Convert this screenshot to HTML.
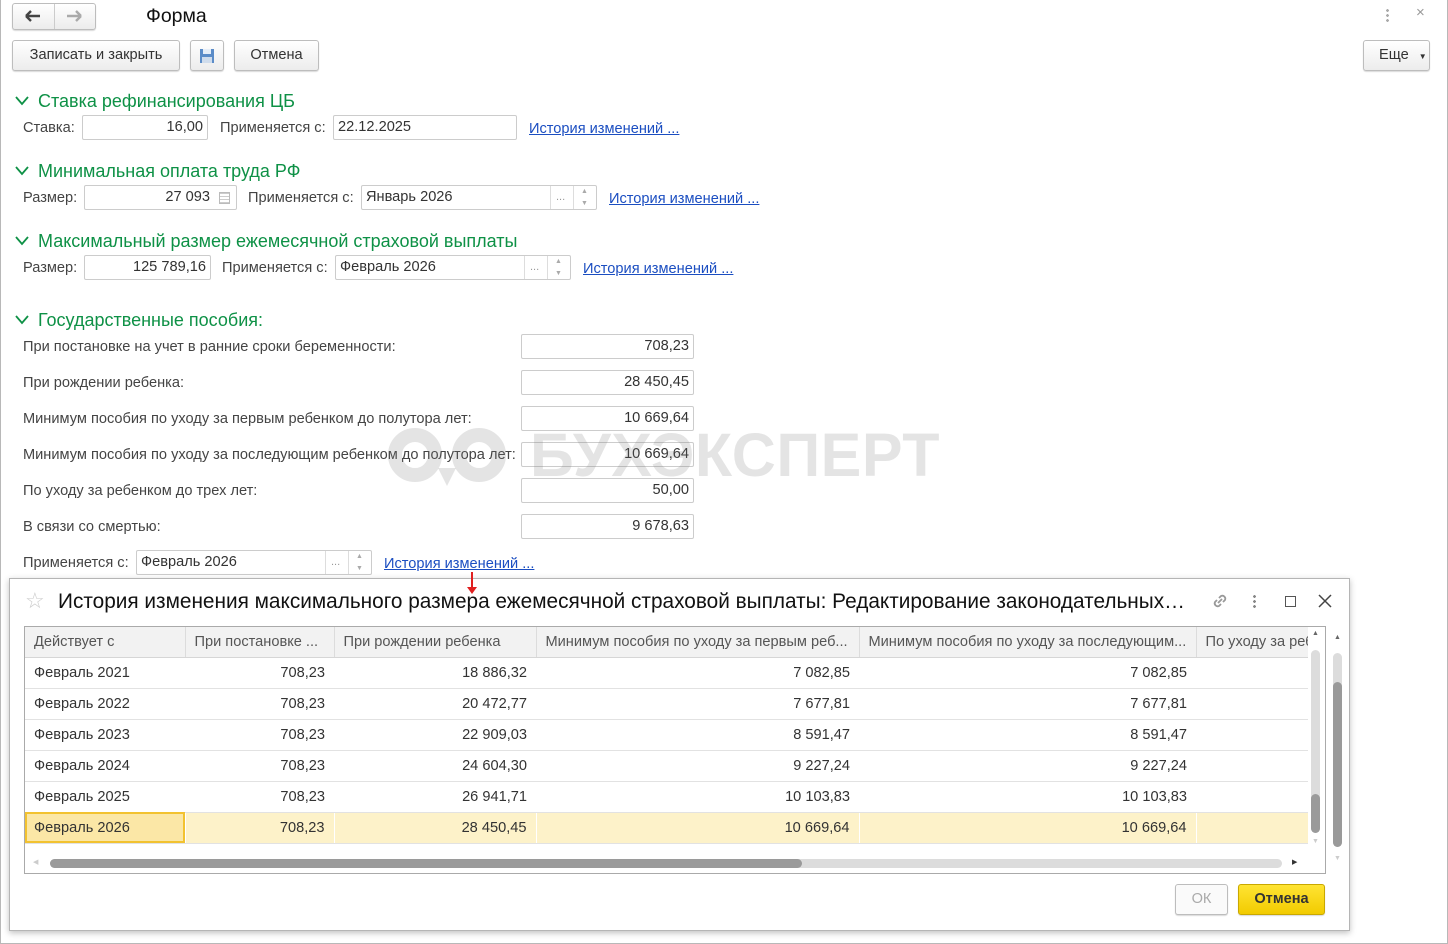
<!DOCTYPE html>
<html><head><meta charset="utf-8"><style>
*{box-sizing:border-box;margin:0;padding:0}
body{width:1448px;height:944px;background:#fff;font-family:"Liberation Sans",Arial,sans-serif;font-size:14.6px;color:#333;position:relative;overflow:hidden}
.a{position:absolute;white-space:nowrap}
.btn{position:absolute;height:31px;border:1px solid #bdbdbd;border-radius:3px;background:linear-gradient(#fff,#ececec);box-shadow:0 1px 1px rgba(0,0,0,.15);text-align:center;line-height:29px;font-size:14.6px;color:#333}
.inp{position:absolute;height:25px;border:1px solid #ccc;border-radius:2px;background:#fff;line-height:23px;padding:0 4px;font-size:14.6px;color:#333}
.r{text-align:right}
.h{position:absolute;font-size:18px;color:#0e9146;white-space:nowrap}
.h svg{position:absolute;left:-23px;top:5px}
.lnk{position:absolute;color:#1b4ec1;text-decoration:underline;white-space:nowrap}
.sp{position:absolute;border-left:1px solid #ddd;height:23px;top:0}
.lab{position:absolute;white-space:nowrap;color:#444}
table{border-collapse:collapse;position:absolute;left:25px;top:627px;width:1283px;table-layout:fixed}
td,th{height:31px;padding:0 9px;font-size:14.6px;white-space:nowrap;overflow:hidden;text-overflow:ellipsis;border-bottom:1px solid #e2e2e2}
th{background:#f2f2f2;color:#555;font-weight:normal;text-align:left;border-right:1px solid #dcdcdc;height:30px;border-bottom:1px solid #d6d6d6}
th:last-child{text-overflow:clip}
td{text-align:right;color:#333}
td:first-child{text-align:left}
tr.sel td{background:#fdf2c9;border-right:1px solid #fff}
</style></head><body>
<div class="a" style="left:0;top:0;width:1448px;height:944px;border:1px solid #b8b8b8;border-top:none"></div>
<div class="btn" style="left:12px;top:3px;width:84px;height:27px;padding:0"></div>
<div class="a" style="left:54px;top:4px;width:1px;height:25px;background:#ccc"></div>
<svg class="a" style="left:24px;top:9px" width="18" height="14"><path d="M2 7H16M2 7L7 2M2 7L7 12" stroke="#444" stroke-width="2.4" fill="none"/></svg>
<svg class="a" style="left:65px;top:9px" width="18" height="14"><path d="M2 7H16M16 7L11 2M16 7L11 12" stroke="#aaa" stroke-width="2.4" fill="none"/></svg>
<div class="a" style="left:146px;top:5px;font-size:19.5px;color:#111">Форма</div>
<div class="a" style="left:1386px;top:8px;width:3px;height:14px;background:radial-gradient(circle,#aaa 1.3px,transparent 1.5px) 0 0/3px 5px"></div>
<div class="a" style="left:1416px;top:4px;font-size:15px;color:#999">×</div>

<div class="btn" style="left:12px;top:40px;width:168px">Записать и закрыть</div>
<div class="btn" style="left:190px;top:40px;width:34px"><svg style="margin-top:7px" width="16" height="16"><rect x="1" y="1" width="14" height="14" fill="#5b8cc8"/><rect x="4" y="1" width="8" height="5" fill="#e6eef8"/><rect x="3" y="9" width="10" height="6" fill="#cfdcec"/></svg></div>
<div class="btn" style="left:234px;top:40px;width:85px">Отмена</div>
<div class="btn" style="left:1363px;top:40px;width:67px;text-align:left;padding-left:15px">Еще <span style="font-size:8px;margin-left:6px">▼</span></div>

<div class="h" style="left:38px;top:91px"><svg width="14" height="10"><path d="M1 1L7 8L13 1" stroke="#0e9146" stroke-width="1.8" fill="none"/></svg>Ставка рефинансирования ЦБ</div>
<div class="lab" style="left:23px;top:120px">Ставка:</div>
<div class="inp r" style="left:82px;top:115px;width:126px">16,00</div>
<div class="lab" style="left:220px;top:120px">Применяется с:</div>
<div class="inp" style="left:333px;top:115px;width:184px">22.12.2025</div>
<div class="lnk" style="left:529px;top:121px">История изменений ...</div>

<div class="h" style="left:38px;top:161px"><svg width="14" height="10"><path d="M1 1L7 8L13 1" stroke="#0e9146" stroke-width="1.8" fill="none"/></svg>Минимальная оплата труда РФ</div>
<div class="lab" style="left:23px;top:190px">Размер:</div>
<div class="inp r" style="left:84px;top:185px;width:153px;padding-right:26px">27 093</div>
<div class="a" style="left:219px;top:192px;width:11px;height:12px;border:1px solid #bbb;background:repeating-linear-gradient(#ccc 0 1px,#fff 1px 3px)"></div>
<div class="lab" style="left:248px;top:190px">Применяется с:</div>
<div class="inp" style="left:361px;top:185px;width:236px">Январь 2026<div class="sp" style="left:188px"></div><div class="sp" style="left:211px"></div><span class="a" style="left:194px;top:0;color:#999;font-size:11px">...</span><span class="a" style="left:219px;top:-6px;color:#aaa;font-size:7px">▲</span><span class="a" style="left:219px;top:6px;color:#aaa;font-size:7px">▼</span></div>
<div class="lnk" style="left:609px;top:191px">История изменений ...</div>

<div class="h" style="left:38px;top:231px"><svg width="14" height="10"><path d="M1 1L7 8L13 1" stroke="#0e9146" stroke-width="1.8" fill="none"/></svg>Максимальный размер ежемесячной страховой выплаты</div>
<div class="lab" style="left:23px;top:260px">Размер:</div>
<div class="inp r" style="left:84px;top:255px;width:127px">125 789,16</div>
<div class="lab" style="left:222px;top:260px">Применяется с:</div>
<div class="inp" style="left:335px;top:255px;width:236px">Февраль 2026<div class="sp" style="left:188px"></div><div class="sp" style="left:211px"></div><span class="a" style="left:194px;top:0;color:#999;font-size:11px">...</span><span class="a" style="left:219px;top:-6px;color:#aaa;font-size:7px">▲</span><span class="a" style="left:219px;top:6px;color:#aaa;font-size:7px">▼</span></div>
<div class="lnk" style="left:583px;top:261px">История изменений ...</div>

<div class="h" style="left:38px;top:310px"><svg width="14" height="10"><path d="M1 1L7 8L13 1" stroke="#0e9146" stroke-width="1.8" fill="none"/></svg>Государственные пособия:</div>
<div class="lab" style="left:23px;top:339px">При постановке на учет в ранние сроки беременности:</div>
<div class="inp r" style="left:521px;top:334px;width:173px">708,23</div>
<div class="lab" style="left:23px;top:375px">При рождении ребенка:</div>
<div class="inp r" style="left:521px;top:370px;width:173px">28 450,45</div>
<div class="lab" style="left:23px;top:411px">Минимум пособия по уходу за первым ребенком до полутора лет:</div>
<div class="inp r" style="left:521px;top:406px;width:173px">10 669,64</div>
<div class="lab" style="left:23px;top:447px">Минимум пособия по уходу за последующим ребенком до полутора лет:</div>
<div class="inp r" style="left:521px;top:442px;width:173px">10 669,64</div>
<div class="lab" style="left:23px;top:483px">По уходу за ребенком до трех лет:</div>
<div class="inp r" style="left:521px;top:478px;width:173px">50,00</div>
<div class="lab" style="left:23px;top:519px">В связи со смертью:</div>
<div class="inp r" style="left:521px;top:514px;width:173px">9 678,63</div>
<div class="lab" style="left:23px;top:555px">Применяется с:</div>
<div class="inp" style="left:136px;top:550px;width:236px">Февраль 2026<div class="sp" style="left:188px"></div><div class="sp" style="left:211px"></div><span class="a" style="left:194px;top:0;color:#999;font-size:11px">...</span><span class="a" style="left:219px;top:-6px;color:#aaa;font-size:7px">▲</span><span class="a" style="left:219px;top:6px;color:#aaa;font-size:7px">▼</span></div>
<div class="lnk" style="left:384px;top:556px">История изменений ...</div>

<svg class="a" style="left:383px;top:418px" width="130" height="72"><g fill="none" stroke="rgba(120,120,120,.2)" stroke-width="14"><circle cx="32" cy="37" r="20"/><circle cx="96" cy="37" r="20"/></g><path d="M0 5L30 14M128 5L98 14M55 50L64 68L73 50Z" fill="rgba(120,120,120,.2)"/></svg>
<div class="a" style="left:530px;top:420px;font-size:61px;font-weight:bold;color:rgba(120,120,120,.2);letter-spacing:0.5px">БУХЭКСПЕРТ</div>

<div class="a" style="left:9px;top:578px;width:1341px;height:353px;background:#fff;border:1px solid #b5b5b5;box-shadow:0 2px 6px rgba(0,0,0,.25)"></div>
<div class="a" style="left:471px;top:572px;width:2px;height:16px;background:#e02020"></div>
<div class="a" style="left:467px;top:587px;border:5px solid transparent;border-top:7px solid #e02020"></div>
<div class="a" style="left:25px;top:588px;font-size:22px;color:#ccc">☆</div>
<div class="a" style="left:58px;top:590px;font-size:20.8px;color:#111">История изменения максимального размера ежемесячной страховой выплаты: Редактирование законодательных…</div>
<svg class="a" style="left:1210px;top:591px" width="20" height="20"><g stroke="#999" stroke-width="1.8" fill="none"><path d="M8 12L12 8"/><path d="M9 7l2-2a3 3 0 0 1 4 4l-2 2"/><path d="M11 13l-2 2a3 3 0 0 1-4-4l2-2"/></g></svg>
<div class="a" style="left:1253px;top:594px;width:3px;height:14px;background:radial-gradient(circle,#888 1.3px,transparent 1.5px) 0 0/3px 5px"></div>
<div class="a" style="left:1285px;top:596px;width:11px;height:11px;border:1.5px solid #555"></div>
<svg class="a" style="left:1318px;top:594px" width="14" height="14"><path d="M1 1L13 13M13 1L1 13" stroke="#444" stroke-width="1.5"/></svg>

<div class="a" style="left:24px;top:626px;width:1302px;height:248px;border:1px solid #aaa"></div>
<table>
<colgroup><col style="width:160px"><col style="width:149px"><col style="width:202px"><col style="width:323px"><col style="width:337px"><col style="width:112px"></colgroup>
<tr><th>Действует с</th><th>При постановке ...</th><th>При рождении ребенка</th><th>Минимум пособия по уходу за первым реб...</th><th>Минимум пособия по уходу за последующим...</th><th>По уходу за ребенком</th></tr>
<tr><td>Февраль 2021</td><td>708,23</td><td>18 886,32</td><td>7 082,85</td><td>7 082,85</td><td></td></tr>
<tr><td>Февраль 2022</td><td>708,23</td><td>20 472,77</td><td>7 677,81</td><td>7 677,81</td><td></td></tr>
<tr><td>Февраль 2023</td><td>708,23</td><td>22 909,03</td><td>8 591,47</td><td>8 591,47</td><td></td></tr>
<tr><td>Февраль 2024</td><td>708,23</td><td>24 604,30</td><td>9 227,24</td><td>9 227,24</td><td></td></tr>
<tr><td>Февраль 2025</td><td>708,23</td><td>26 941,71</td><td>10 103,83</td><td>10 103,83</td><td></td></tr>
<tr class="sel"><td style="outline:2px solid #f2c230;outline-offset:-2px;background:#fbe7a6">Февраль 2026</td><td>708,23</td><td>28 450,45</td><td>10 669,64</td><td>10 669,64</td><td></td></tr>
</table>
<div class="a" style="left:1308px;top:627px;width:17px;height:230px;background:#fff"></div>
<div class="a" style="left:1312px;top:630px;font-size:7px;color:#666">▲</div>
<div class="a" style="left:1311px;top:650px;width:9px;height:183px;border-radius:5px;background:#dcdcdc"></div>
<div class="a" style="left:1311px;top:794px;width:9px;height:39px;border-radius:5px;background:#9a9a9a"></div>
<div class="a" style="left:1312px;top:838px;font-size:7px;color:#ccc">▼</div>
<div class="a" style="left:33px;top:858px;font-size:7px;color:#ccc">◀</div>
<div class="a" style="left:50px;top:859px;width:1232px;height:9px;border-radius:5px;background:#dcdcdc"></div>
<div class="a" style="left:50px;top:859px;width:752px;height:9px;border-radius:5px;background:#9a9a9a"></div>
<div class="a" style="left:1292px;top:858px;font-size:7px;color:#333">▶</div>
<div class="a" style="left:1334px;top:634px;font-size:7px;color:#666">▲</div>
<div class="a" style="left:1333px;top:653px;width:9px;height:194px;border-radius:5px;background:#dcdcdc"></div>
<div class="a" style="left:1333px;top:682px;width:9px;height:165px;border-radius:5px;background:#9a9a9a"></div>
<div class="a" style="left:1334px;top:855px;font-size:7px;color:#ccc">▼</div>

<div class="btn" style="left:1175px;top:884px;width:53px;color:#aaa;background:#fafafa">ОК</div>
<div class="btn" style="left:1238px;top:884px;width:87px;background:linear-gradient(#ffe433,#f2cb00);border-color:#c9a800;font-weight:bold;color:#333">Отмена</div>
</body></html>
